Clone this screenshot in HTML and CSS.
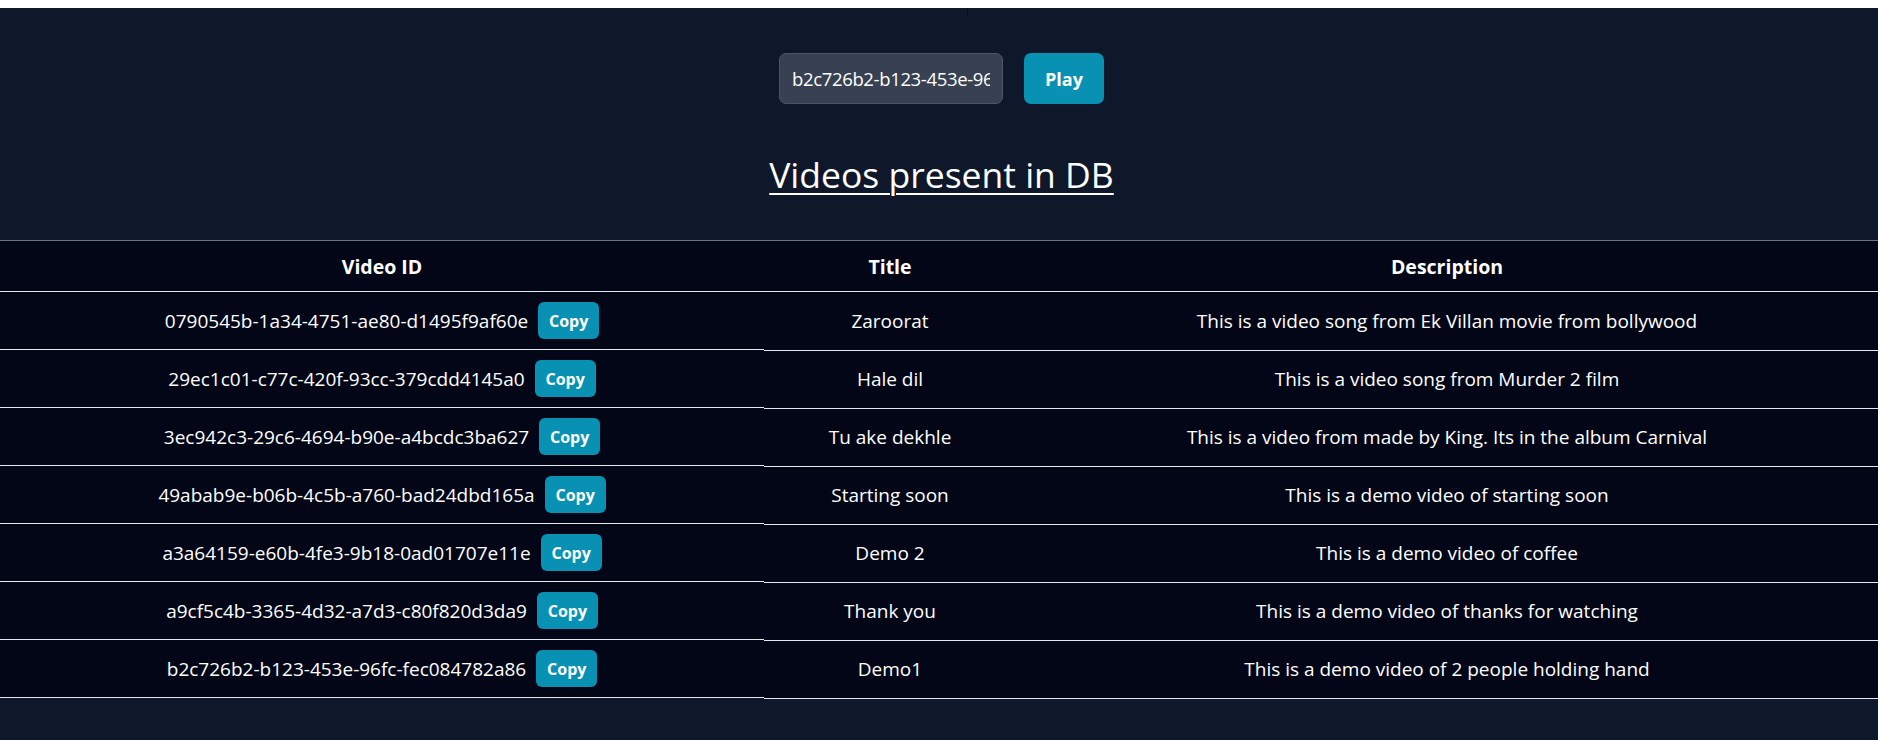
FILE: index.html
```html
<!DOCTYPE html>
<html lang="en">
<head>
<meta charset="utf-8">
<title>Videos</title>
<link rel="stylesheet" href="styles.css">
</head>
<body>
<div class="cursor-mark"></div>
<main class="page">
  <form class="player-form">
    <input class="id-input" type="text" value="b2c726b2-b123-453e-96fc-fec084782a86">
    <button class="btn btn-play" type="button">Play</button>
  </form>
  <h1 class="heading">Videos present in DB</h1>
  <table class="videos">
    <colgroup>
      <col class="col-id">
      <col class="col-title">
      <col class="col-desc">
    </colgroup>
    <thead>
      <tr><th>Video ID</th><th>Title</th><th>Description</th></tr>
    </thead>
    <tbody>
      <tr>
        <td class="id-cell"><div class="id-wrap"><span>0790545b-1a34-4751-ae80-d1495f9af60e</span><button class="btn btn-copy" type="button">Copy</button></div></td>
        <td>Zaroorat</td>
        <td>This is a video song from Ek Villan movie from bollywood</td>
      </tr>
      <tr>
        <td class="id-cell"><div class="id-wrap"><span>29ec1c01-c77c-420f-93cc-379cdd4145a0</span><button class="btn btn-copy" type="button">Copy</button></div></td>
        <td>Hale dil</td>
        <td>This is a video song from Murder 2 film</td>
      </tr>
      <tr>
        <td class="id-cell"><div class="id-wrap"><span>3ec942c3-29c6-4694-b90e-a4bcdc3ba627</span><button class="btn btn-copy" type="button">Copy</button></div></td>
        <td>Tu ake dekhle</td>
        <td>This is a video from made by King. Its in the album Carnival</td>
      </tr>
      <tr>
        <td class="id-cell"><div class="id-wrap"><span>49abab9e-b06b-4c5b-a760-bad24dbd165a</span><button class="btn btn-copy" type="button">Copy</button></div></td>
        <td>Starting soon</td>
        <td>This is a demo video of starting soon</td>
      </tr>
      <tr>
        <td class="id-cell"><div class="id-wrap"><span>a3a64159-e60b-4fe3-9b18-0ad01707e11e</span><button class="btn btn-copy" type="button">Copy</button></div></td>
        <td>Demo 2</td>
        <td>This is a demo video of coffee</td>
      </tr>
      <tr>
        <td class="id-cell"><div class="id-wrap"><span>a9cf5c4b-3365-4d32-a7d3-c80f820d3da9</span><button class="btn btn-copy" type="button">Copy</button></div></td>
        <td>Thank you</td>
        <td>This is a demo video of thanks for watching</td>
      </tr>
      <tr>
        <td class="id-cell"><div class="id-wrap"><span>b2c726b2-b123-453e-96fc-fec084782a86</span><button class="btn btn-copy" type="button">Copy</button></div></td>
        <td>Demo1</td>
        <td>This is a demo video of 2 people holding hand</td>
      </tr>
    </tbody>
  </table>
</main>
</body>
</html>
```

FILE: styles.css
```css
html {
  background: #ffffff;
}

body {
  margin: 0;
  font-family: "Open Sans", "Noto Sans", sans-serif;
  color: #ffffff;
}

.cursor-mark {
  position: absolute;
  left: 967px;
  top: 8px;
  width: 1px;
  height: 7px;
  background: #0b0f06;
}

.page {
  margin-top: 8px;
  min-height: calc(100vh - 8px);
  background: #0f172a;
  display: flex;
  flex-direction: column;
  align-items: center;
  padding-top: 45px;
  box-sizing: border-box;
}

.player-form {
  display: flex;
  gap: 21px;
  margin: 0;
  padding-left: 5px;
}

.id-input {
  box-sizing: border-box;
  width: 224px;
  height: 51px;
  padding: 0 12px;
  border: 1px solid #4b5563;
  border-radius: 7px;
  background: #374151;
  color: #ffffff;
  font-family: inherit;
  font-size: 18.5px;
  letter-spacing: -0.35px;
  outline: none;
}

.btn {
  border: none;
  color: #ffffff;
  background: #0891b2;
  font-family: inherit;
  font-weight: 700;
  cursor: pointer;
}

.btn-play {
  width: 80px;
  height: 51px;
  border-radius: 7px;
  font-size: 18px;
}

.heading {
  margin: 48px 0 43px;
  padding-left: 5px;
  font-size: 35.5px;
  line-height: 45px;
  font-weight: 400;
  text-decoration: underline;
  text-decoration-thickness: 2px;
  text-underline-offset: 5px;
}

.videos {
  width: 100%;
  border-collapse: separate;
  border-spacing: 0;
  border-top: 1px solid #6b7280;
  background: #020617;
  table-layout: fixed;
  font-size: 19px;
}

.col-id { width: 764px; }
.col-title { width: 252px; }
.col-desc { width: auto; }

.videos th {
  height: 50px;
  padding: 0;
  font-size: 19.5px;
  font-weight: 700;
  text-align: center;
  vertical-align: middle;
  border-bottom: 1px solid #e5e7eb;
}

.videos td {
  height: 57px;
  padding: 0;
  text-align: center;
  vertical-align: middle;
  border-bottom: 1px solid transparent;
  box-shadow: 0 1px 0 #e5e7eb;
}

.videos td.id-cell {
  border-bottom-color: #e5e7eb;
  box-shadow: none;
}

.id-wrap {
  display: flex;
  justify-content: center;
  align-items: center;
  gap: 10px;
}

.btn-copy {
  width: 61px;
  height: 37px;
  border-radius: 6px;
  font-size: 16px;
  padding: 0;
}
```
